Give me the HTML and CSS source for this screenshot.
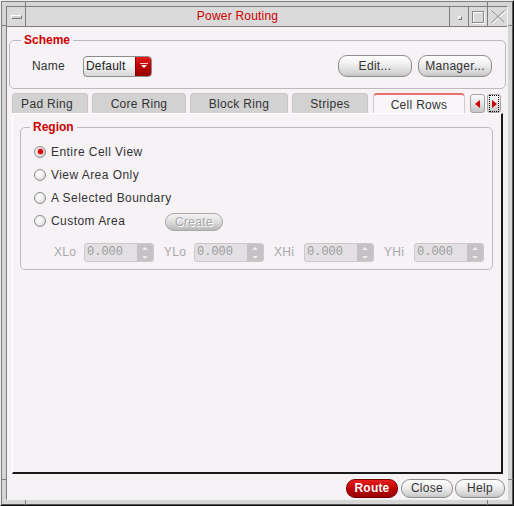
FILE: index.html
```html
<!DOCTYPE html>
<html>
<head>
<meta charset="utf-8">
<title>Power Routing</title>
<link rel="stylesheet" href="styles.css">
</head>
<body>
<div class="window">
  <span class="notch nv nt n1"></span>
  <span class="notch nv nt n2"></span>
  <span class="notch nv nb n1"></span>
  <span class="notch nv nb n2"></span>
  <span class="notch nh nl n3"></span>
  <span class="notch nh nl n4"></span>
  <span class="notch nh nr n3"></span>
  <span class="notch nh nr n4"></span>
  <div class="frame">
    <div class="inner">
      <div class="titlebar">
        <div class="tb-btn tb-menu"><span class="menu-bar"></span></div>
        <div class="tb-title">Power Routing</div>
        <div class="tb-btn tb-min"><span class="min-dot"></span></div>
        <div class="tb-btn tb-max"><span class="max-box"></span></div>
        <div class="tb-btn tb-close">
          <svg width="16" height="15" viewBox="0 0 16 15">
            <path d="M1.5 1.5 L14.5 13.5 M14.5 1.5 L1.5 13.5" stroke="#ffffff" stroke-width="1" fill="none" transform="translate(1,1)"/>
            <path d="M1.5 1.5 L14.5 13.5 M14.5 1.5 L1.5 13.5" stroke="#8a8a8a" stroke-width="1" fill="none"/>
          </svg>
        </div>
      </div>
      <div class="client">
        <fieldset class="group scheme">
          <legend>Scheme</legend>
          <div class="scheme-row">
            <span class="name-lbl">Name</span>
            <div class="combo">
              <span class="combo-text">Default</span>
              <span class="combo-arrow">
                <svg width="8" height="6" viewBox="0 0 8 6"><rect x="0" y="0" width="8" height="1" fill="#f6c8c8"/><polygon points="1,2 7,2 4,5" fill="#ffffff"/></svg>
              </span>
            </div>
            <div class="spacer"></div>
            <button class="btn btn-edit">Edit...</button>
            <button class="btn btn-manager">Manager...</button>
          </div>
        </fieldset>

        <div class="tabs">
          <div class="tab w-pad">Pad Ring</div>
          <div class="tab w-core">Core Ring</div>
          <div class="tab w-block">Block Ring</div>
          <div class="tab w-stripes">Stripes</div>
          <div class="tab tab-active w-cell">Cell Rows</div>
          <div class="tab-arrow arrow-left">
            <svg width="5" height="8" viewBox="0 0 5 8"><polygon points="5,0 5,8 0,4" fill="#cc0000"/></svg>
          </div>
          <div class="tab-arrow arrow-right">
            <span class="focus-rect">
              <svg width="5" height="8" viewBox="0 0 5 8"><polygon points="0,0 0,8 5,4" fill="#cc0000"/></svg>
            </span>
          </div>
        </div>

        <div class="panel">
          <fieldset class="group region">
            <legend>Region</legend>
            <div class="radio-row">
              <span class="radio on"></span><span class="rlabel">Entire Cell View</span>
            </div>
            <div class="radio-row">
              <span class="radio"></span><span class="rlabel">View Area Only</span>
            </div>
            <div class="radio-row">
              <span class="radio"></span><span class="rlabel">A Selected Boundary</span>
            </div>
            <div class="radio-row">
              <span class="radio"></span><span class="rlabel custom-lbl">Custom Area</span>
              <button class="btn btn-create" disabled>Create</button>
            </div>
            <div class="spin-row">
              <div class="spin-group"><span class="spin-lbl">XLo</span><div class="spin"><span class="spin-val">0.000</span><span class="spin-btns"><i class="up"></i><i class="down"></i></span></div></div>
              <div class="spin-group"><span class="spin-lbl">YLo</span><div class="spin"><span class="spin-val">0.000</span><span class="spin-btns"><i class="up"></i><i class="down"></i></span></div></div>
              <div class="spin-group"><span class="spin-lbl">XHi</span><div class="spin"><span class="spin-val">0.000</span><span class="spin-btns"><i class="up"></i><i class="down"></i></span></div></div>
              <div class="spin-group"><span class="spin-lbl">YHi</span><div class="spin"><span class="spin-val">0.000</span><span class="spin-btns"><i class="up"></i><i class="down"></i></span></div></div>
            </div>
          </fieldset>
        </div>

        <div class="footer">
          <button class="btn btn-route">Route</button>
          <button class="btn btn-close">Close</button>
          <button class="btn btn-help">Help</button>
        </div>
      </div>
    </div>
  </div>
</div>
</body>
</html>
```

FILE: styles.css
```css
* { box-sizing: border-box; }
html, body { margin: 0; padding: 0; }
body {
  width: 514px;
  height: 506px;
  background: #d6d6d6;
  font-family: "Liberation Sans", Arial, sans-serif;
  font-size: 12px;
  color: #333333;
  overflow: hidden;
}

/* ---------- window frame ---------- */
.window {
  position: relative;
  width: 514px;
  height: 506px;
  background: #d6d6d6;
  border: 1px solid;
  border-color: #ececec #111111 #111111 #ececec;
}
.frame {
  height: 100%;
  border: 1px solid;
  border-color: #7e7e7e #555555 #555555 #7e7e7e;
  padding: 4px;
}
.inner {
  height: 100%;
  border: 1px solid;
  border-color: #7e7e7e #f2f2f2 #f2f2f2 #7e7e7e;
  display: flex;
  flex-direction: column;
}
.notch { position: absolute; background: #7e7e7e; }
.nv { width: 1px; height: 5px; }
.nh { height: 1px; width: 5px; }
.nt { top: 0; }
.nb { bottom: 0; }
.nl { left: 0; }
.nr { right: 0; }
.nv.n1 { left: 24px; }
.nv.n2 { left: 486px; }
.nh.n3 { top: 24px; }
.nh.n4 { top: 478px; }

/* ---------- title bar ---------- */
.titlebar {
  height: 20px;
  display: flex;
  background: #dadada;
  border-bottom: 1px solid #7e7e7e;
  flex: none;
}
.tb-btn {
  width: 19px;
  display: flex;
  align-items: center;
  justify-content: center;
}
.tb-menu { width: 19px; border-right: 1px solid #7e7e7e; }
.tb-min, .tb-max, .tb-close { border-left: 1px solid #7e7e7e; }
.tb-close { width: 20px; }
.menu-bar {
  width: 11px;
  height: 4px;
  border: 1px solid;
  border-color: #ffffff #7a7a7a #7a7a7a #ffffff;
  background: #d0d0d0;
}
.min-dot {
  width: 4px;
  height: 4px;
  border: 1px solid;
  border-color: #ffffff #7a7a7a #7a7a7a #ffffff;
  margin-top: 3px;
  margin-left: 1px;
}
.max-box {
  width: 12px;
  height: 12px;
  border: 1px solid #8a8a8a;
  box-shadow: inset 1px 1px 0 #ffffff, 1px 1px 0 #ffffff;
}
.tb-title {
  flex: 1;
  text-align: center;
  line-height: 19px;
  color: #cc0000;
  letter-spacing: 0.2px;
}

/* ---------- client area ---------- */
.client {
  flex: 1;
  background: #f6f2f6;
  display: flex;
  flex-direction: column;
  min-height: 0;
}

.group {
  border: 1px solid #bdb9bd;
  border-radius: 5px;
  padding: 0;
  min-width: 0;
}
.group legend {
  font-weight: bold;
  color: #cc0000;
  font-size: 12px;
  line-height: 14px;
  padding: 0 3px;
}

.scheme {
  margin: 6px 1px 0 2px;
  padding: 8px 0 11px 0;
}
.scheme legend { margin-left: 11px; }
.scheme-row {
  display: flex;
  align-items: center;
  height: 22px;
  padding: 0 13px 0 22px;
}
.name-lbl { width: 51px; letter-spacing: 0.2px; }
.combo {
  width: 69px;
  height: 21px;
  display: flex;
  border: 1px solid #8c8c8c;
  border-radius: 4px;
  overflow: hidden;
  background: linear-gradient(#ffffff, #f0f0f0 50%, #d8d8d8);
}
.combo-text {
  flex: 1;
  padding-left: 2px;
  line-height: 19px;
  color: #222222;
  letter-spacing: 0.2px;
}
.combo-arrow {
  width: 16px;
  display: flex;
  align-items: center;
  justify-content: center;
  background: linear-gradient(#e01c1c, #b80000 55%, #960000);
  border-left: 1px solid #8a0000;
}
.spacer { flex: 1; }

.btn {
  font-family: "Liberation Sans", Arial, sans-serif;
  font-size: 12px;
  color: #333333;
  height: 22px;
  padding: 0;
  border: 1px solid #8e8e8e;
  border-radius: 9px;
  background: linear-gradient(#ffffff, #f0f0f0 40%, #d4d4d4 85%, #c4c4c4);
  letter-spacing: 0.3px;
}
.btn-edit { width: 74px; }
.btn-manager { width: 74px; margin-left: 6px; }

/* ---------- tabs ---------- */
.tabs {
  display: flex;
  align-items: flex-end;
  height: 20px;
  margin: 4px 0 0 5px;
  flex: none;
}
.tab {
  height: 20px;
  background: #d2d2d2;
  border: 1px solid #c6c6c6;
  border-bottom: none;
  border-radius: 4px 4px 0 0;
  text-align: center;
  line-height: 19px;
  padding-top: 1px;
  color: #333333;
  letter-spacing: 0.3px;
  margin-right: 4px;
}
.w-pad { width: 76px; padding-right: 6px; }
.w-core { width: 94px; }
.w-block { width: 98px; }
.w-stripes { width: 76px; margin-right: 5px; }
.w-cell { width: 92px; margin-right: 5px; }
.tab-active {
  background: #f8f6f8;
  border-top: 2px solid #e47070;
  border-color: #e47070 #cccccc #cccccc #cccccc;
  line-height: 18px;
}
.tab-arrow {
  height: 19px;
  display: flex;
  align-items: center;
  justify-content: center;
  border: 1px solid #a4a4a4;
  border-radius: 3px;
  background: linear-gradient(#fafafa, #e4e4e4 50%, #c4c4c4);
}
.arrow-left { width: 15px; margin-right: 2px; }
.arrow-right { width: 14px; }
.focus-rect {
  width: 10px;
  height: 17px;
  display: flex;
  align-items: center;
  justify-content: center;
  border: 1px dotted #000000;
}

/* ---------- panel ---------- */
.panel {
  flex: 1;
  margin: 0 4px 0 5px;
  border-style: solid;
  border-width: 1px 2px 2px 1px;
  border-color: #ffffff #1a1a1a #1a1a1a #ffffff;
  min-height: 0;
}
.region {
  margin: 6px 8px 0 7px;
  padding: 6px 0 7px 0;
}
.region legend { margin-left: 9px; }
.radio-row {
  display: flex;
  align-items: center;
  height: 23px;
  padding-left: 13px;
}
.radio {
  width: 12px;
  height: 12px;
  border-radius: 50%;
  border: 1px solid #8c8c8c;
  background: radial-gradient(circle at 40% 35%, #ffffff 0%, #f2f2f2 40%, #c8c8c8 100%);
  margin-right: 5px;
  display: flex;
  align-items: center;
  justify-content: center;
  flex: none;
}
.radio.on::after {
  content: "";
  width: 5px;
  height: 5px;
  border-radius: 50%;
  background: #d40000;
  box-shadow: 0 0 1px 1px rgba(230, 80, 80, 0.5);
}
.rlabel { letter-spacing: 0.45px; color: #333333; }
.custom-lbl { width: 114px; }
.btn-create {
  width: 58px;
  height: 18px;
  margin-top: 3px;
  color: #a8a8a8;
  text-shadow: 1px 1px 0 #ffffff;
  border-color: #a8a8a8;
  background: linear-gradient(#f4f4f4, #dedede 50%, #b8b8b8);
}

.spin-row {
  display: flex;
  height: 19px;
  margin-top: 11px;
  padding-left: 33px;
}
.spin-group { display: flex; margin-right: 10px; }
.spin-lbl {
  width: 30px;
  color: #a8a8a8;
  line-height: 19px;
  letter-spacing: 0.3px;
}
.spin {
  width: 70px;
  height: 19px;
  display: flex;
  border: 1px solid #cacaca;
  border-radius: 3px;
  background: #e2e0e2;
  overflow: hidden;
}
.spin-val {
  flex: 1;
  font-family: "Liberation Mono", "DejaVu Sans Mono", monospace;
  font-size: 12px;
  line-height: 17px;
  color: #9c9c9c;
  padding-left: 2px;
}
.spin-btns {
  width: 16px;
  background: #c4c2c4;
  display: flex;
  flex-direction: column;
  align-items: center;
  justify-content: space-between;
  padding: 3px 0 2px;
}
.spin-btns .up {
  width: 0; height: 0;
  border-left: 3px solid transparent;
  border-right: 3px solid transparent;
  border-bottom: 3px solid #ececec;
}
.spin-btns .down {
  width: 0; height: 0;
  border-left: 3px solid transparent;
  border-right: 3px solid transparent;
  border-top: 3px solid #ececec;
}

/* ---------- footer ---------- */
.footer {
  height: 25px;
  flex: none;
  display: flex;
  justify-content: flex-end;
  align-items: flex-start;
  padding: 5px 2px 0 0;
}
.footer .btn { height: 19px; border-radius: 9px; line-height: 17px; }
.btn-route {
  width: 52px;
  color: #ffffff;
  font-weight: bold;
  border-color: #7a0000;
  background: linear-gradient(#e82020, #c00000 50%, #980000);
  letter-spacing: 0.2px;
}
.btn-close { width: 52px; margin-left: 3px; }
.btn-help { width: 50px; margin-left: 2px; }
```
